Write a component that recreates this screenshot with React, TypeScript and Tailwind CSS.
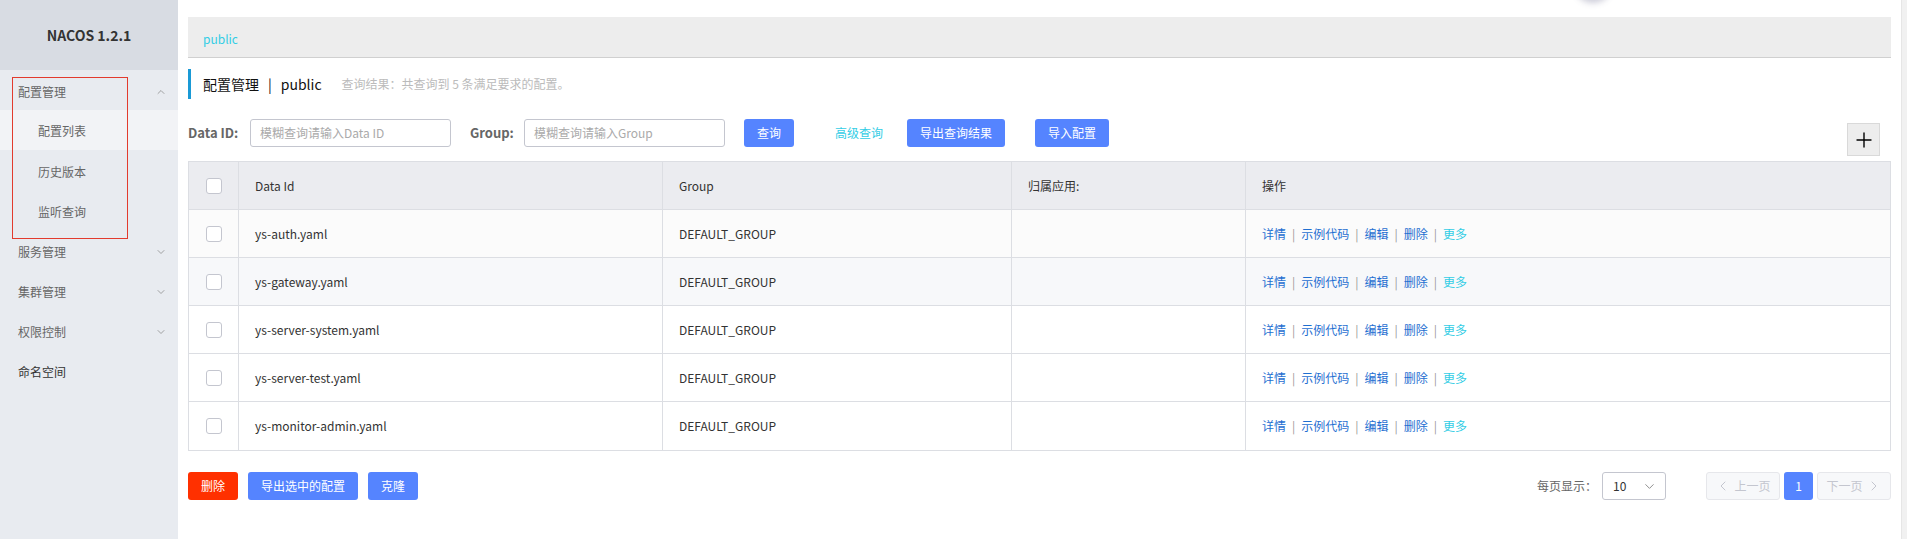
import { ChevronDown, ChevronUp, ChevronLeft, ChevronRight, Plus } from "lucide-react";

const rows = [
  "ys-auth.yaml",
  "ys-gateway.yaml",
  "ys-server-system.yaml",
  "ys-server-test.yaml",
  "ys-monitor-admin.yaml",
];

const rowBg = ["bg-[#fbfbfb]", "bg-[#f7f8fa]", "bg-white", "bg-white", "bg-white"];

function Checkbox() {
  return <div className="w-[16px] h-[16px] rounded-[3px] border border-[#c4c6cf] bg-white" />;
}

function MenuItem({ label, open, dark }: { label: string; open?: boolean; dark?: boolean }) {
  return (
    <div className="h-[40px] flex items-center justify-between pl-[18px] pr-[11px] pt-[3px]">
      <span className={dark ? "text-[#333]" : "text-[#666]"}>{label}</span>
      {open === undefined ? null : open ? (
        <ChevronUp className="w-[12px] h-[12px] text-[#888]" strokeWidth={1.5} />
      ) : (
        <ChevronDown className="w-[12px] h-[12px] text-[#888]" strokeWidth={1.5} />
      )}
    </div>
  );
}

function Sidebar() {
  return (
    <div className="relative w-[178px] shrink-0 bg-[#e8ebf0] text-[12px]">
      <div className="h-[70px] bg-[#d8dce3] flex items-center justify-center">
        <span className="text-[14px] font-bold text-[#333]">NACOS 1.2.1</span>
      </div>
      <MenuItem label="配置管理" open />
      <div className="h-[40px] flex items-center pl-[38px] pt-[2px] bg-[#f2f3f6] text-[#666]">配置列表</div>
      <div className="h-[40px] flex items-center pl-[38px] pt-[3px] text-[#666]">历史版本</div>
      <div className="h-[40px] flex items-center pl-[38px] pt-[3px] text-[#666]">监听查询</div>
      <MenuItem label="服务管理" open={false} />
      <MenuItem label="集群管理" open={false} />
      <MenuItem label="权限控制" open={false} />
      <MenuItem label="命名空间" dark />
      {/* red annotation box */}
      <div className="absolute left-[12px] top-[77px] w-[116px] h-[162px] border border-[#e23b2e]" />
    </div>
  );
}

function Actions() {
  const sep = <span className="mx-[6px] text-[#999]">|</span>;
  return (
    <div className="flex items-center text-[12px]">
      <span className="text-[#1f6fd1]">详情</span>
      {sep}
      <span className="text-[#1f6fd1]">示例代码</span>
      {sep}
      <span className="text-[#1f6fd1]">编辑</span>
      {sep}
      <span className="text-[#1f6fd1]">删除</span>
      {sep}
      <span className="text-[#33cde5]">更多</span>
    </div>
  );
}

export default function App() {
  return (
    <div className="flex h-[539px] w-full overflow-hidden bg-white font-['Noto_Sans_CJK_SC','Noto_Sans',sans-serif] text-[12px] text-[#333]">
      <Sidebar />

      <div className="relative flex-1 pl-[10px] pr-[10px] pt-[17px]">
        {/* floating button shadow peeking from the top edge */}
        <div className="absolute left-[1396px] top-[-44px] w-[38px] h-[44px] rounded-full bg-white shadow-[0_3px_6px_rgba(90,90,130,0.3)]" />

        <div className="h-[41px] bg-[#ededed] border-b border-[#d0d0d0] flex items-center pl-[15px] pt-[4px]">
          <span className="text-[#33cde5]">public</span>
        </div>

        <div className="mt-[11px] h-[30px] flex items-center border-l-[3px] border-[#1a9ad6] pl-[12px]">
          <span className="text-[14px] text-[#111]">配置管理</span>
          <span className="text-[14px] text-[#111] mx-[9px]">|</span>
          <span className="text-[14px] text-[#111]">public</span>
          <span className="ml-[20px] text-[#bbb]">查询结果：共查询到 5 条满足要求的配置。</span>
        </div>

        <div className="mt-[20px] flex items-start">
          <div className="h-[28px] flex items-center">
            <span className="w-[62px] text-[13px] font-bold text-[#666]">Data ID:</span>
            <div className="w-[201px] h-[28px] border border-[#c4c6cf] rounded-[3px] flex items-center px-[9px] text-[#aaa]">
              模糊查询请输入Data ID
            </div>
            <span className="ml-[19px] w-[54px] text-[13px] font-bold text-[#666]">Group:</span>
            <div className="w-[201px] h-[28px] border border-[#c4c6cf] rounded-[3px] flex items-center px-[9px] text-[#aaa]">
              模糊查询请输入Group
            </div>
            <button className="ml-[19px] w-[50px] h-[28px] rounded-[3px] bg-[#5584ff] text-white">查询</button>
            <span className="ml-[41px] text-[#33cde5]">高级查询</span>
            <button className="ml-[24px] w-[98px] h-[28px] rounded-[3px] bg-[#5584ff] text-white">导出查询结果</button>
            <button className="ml-[30px] w-[74px] h-[28px] rounded-[3px] bg-[#5584ff] text-white">导入配置</button>
          </div>
          <div className="ml-auto mr-[11px] mt-[4px] w-[33px] h-[33px] bg-[#ededed] border border-[#d9d9d9] flex items-center justify-center">
            <Plus className="w-[24px] h-[24px] text-black" strokeWidth={1.4} />
          </div>
        </div>

        <div className="mt-[5px] border border-[#dcdee3]">
          <div className="grid grid-cols-[50px_424px_349px_234px_1fr] h-[48px] bg-[#ebecf0] border-b border-[#dcdee3]">
            <div className="flex items-center justify-center border-r border-[#dcdee3]">
              <Checkbox />
            </div>
            <div className="flex items-center pl-[16px] border-r border-[#dcdee3]">Data Id</div>
            <div className="flex items-center pl-[16px] border-r border-[#dcdee3]">Group</div>
            <div className="flex items-center pl-[16px] border-r border-[#dcdee3]">归属应用:</div>
            <div className="flex items-center pl-[16px]">操作</div>
          </div>
          {rows.map((r, i) => (
            <div
              key={r}
              className={`grid grid-cols-[50px_424px_349px_234px_1fr] h-[48px] ${rowBg[i]} ${i < rows.length - 1 ? "border-b border-[#dcdee3]" : ""}`}
            >
              <div className="flex items-center justify-center border-r border-[#dcdee3]">
                <Checkbox />
              </div>
              <div className="flex items-center pl-[16px] border-r border-[#dcdee3]">{r}</div>
              <div className="flex items-center pl-[16px] border-r border-[#dcdee3]">DEFAULT_GROUP</div>
              <div className="border-r border-[#dcdee3]" />
              <div className="flex items-center pl-[16px]">
                <Actions />
              </div>
            </div>
          ))}
        </div>

        <div className="mt-[21px] flex items-center">
          <button className="w-[50px] h-[28px] rounded-[3px] bg-[#ff3000] text-white">删除</button>
          <button className="ml-[10px] w-[110px] h-[28px] rounded-[3px] bg-[#5584ff] text-white">导出选中的配置</button>
          <button className="ml-[10px] w-[50px] h-[28px] rounded-[3px] bg-[#5584ff] text-white">克隆</button>

          <div className="ml-auto flex items-center">
            <span className="text-[#666]">每页显示：</span>
            <div className="ml-[5px] w-[64px] h-[28px] border border-[#c4c6cf] rounded-[3px] flex items-center justify-between pl-[10px] pr-[8px]">
              <span className="text-[#333]">10</span>
              <ChevronDown className="w-[15px] h-[15px] text-[#888]" strokeWidth={1.5} />
            </div>
            <div className="ml-[40px] w-[74px] h-[28px] rounded-[3px] border border-[#e6e7eb] bg-[#f7f8fa] flex items-center justify-center text-[#c4c6cf]">
              <ChevronLeft className="w-[16px] h-[16px]" strokeWidth={1.5} />
              <span className="ml-[3px]">上一页</span>
            </div>
            <div className="ml-[4px] w-[29px] h-[28px] rounded-[3px] bg-[#5584ff] text-white flex items-center justify-center">1</div>
            <div className="ml-[4px] w-[74px] h-[28px] rounded-[3px] border border-[#e6e7eb] bg-[#f7f8fa] flex items-center justify-center text-[#c4c6cf]">
              <span className="mr-[3px]">下一页</span>
              <ChevronRight className="w-[16px] h-[16px]" strokeWidth={1.5} />
            </div>
          </div>
        </div>
      </div>

      <div className="w-[6px] shrink-0 bg-[#f1f1f1] border-l border-[#e6e6e6]" />
    </div>
  );
}
